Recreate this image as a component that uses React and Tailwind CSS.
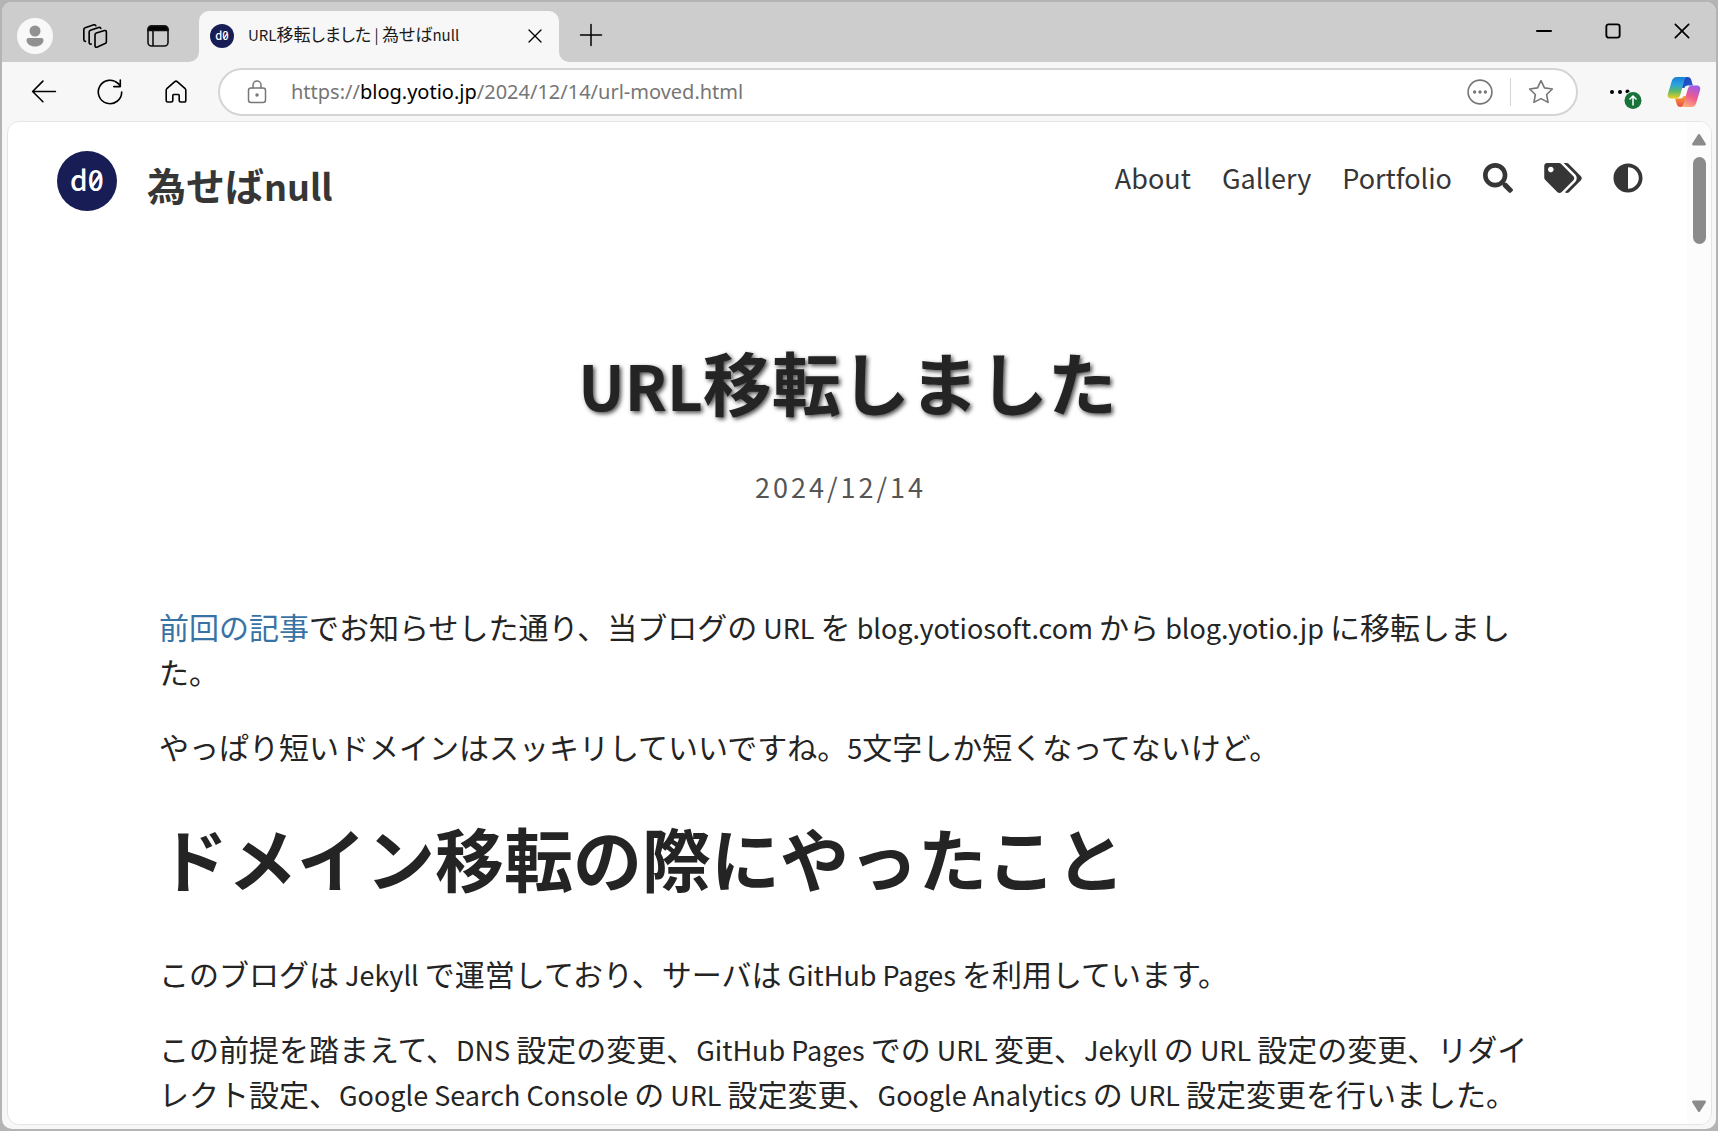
import { FaSearch, FaTags, FaAdjust } from "react-icons/fa";

const iconBtn = "flex items-center justify-center shrink-0";

function Line({ children, className, sw = 2 }) {
  return (
    <svg viewBox="0 0 24 24" className={className} fill="none" stroke="currentColor" strokeWidth={sw} strokeLinecap="round" strokeLinejoin="round" aria-hidden="true">
      {children}
    </svg>
  );
}

function Logo({ className }) {
  return (
    <svg viewBox="0 0 60 60" className={className} role="img" aria-label="d0">
      <circle cx="30" cy="30" r="30" fill="#181d55" />
      <text x="13" y="40" fill="#fff" className="font-['Noto_Sans_CJK_JP',sans-serif] text-[28px] font-medium">d0</text>
      <path d="M34.500 36L43 24" stroke="#fff" strokeWidth="3" />
    </svg>
  );
}

// Latin runs are set slightly smaller than the surrounding kana and kanji.
function L({ children }) {
  return <span className="text-[27px] leading-none">{children}</span>;
}

function TabStrip() {
  return (
    <div className="flex h-15 bg-[#cdcdcd]">
      <div className="flex items-center pl-[15px] pt-2">
        <button aria-label="Profile" className={`${iconBtn} size-9 rounded-full bg-[#f8f8f8]`}>
          <svg viewBox="0 0 36 36" className="size-9" fill="#919191" aria-hidden="true">
            <circle cx="18" cy="13" r="5.5" />
            <path d="M11.5 20h13a2 2 0 0 1 2 2c0 4-4 6.500-8.500 6.500S9.500 26 9.500 22a2 2 0 0 1 2-2z" />
          </svg>
        </button>
        <button aria-label="Workspaces" className={`${iconBtn} ml-[26px] w-8 h-9`}>
          <Line className="size-[26px]" sw={1.5}>
            <path d="M13.200 9.300l7.600-2.300c1-.3 1.700.3 1.700 1.300v8.900c0 .9-.4 1.500-1.200 1.800l-7.600 3.300c-1 .4-1.700-.2-1.700-1.200v-10c0-.9.400-1.500 1.200-1.800z" />
            <path d="M8.500 19.500c-1.300.1-1.900-.4-1.900-1.400V8.400c0-.9.400-1.400 1.200-1.700l7.600-2.500c1-.3 1.700 0 1.900.8" />
            <path d="M3.200 17c-1-.1-1.500-.7-1.500-1.600V6c0-.9.400-1.400 1.200-1.700l8-2.600c1-.3 1.600 0 1.900.8" />
          </Line>
        </button>
        <button aria-label="Tab actions" className={`${iconBtn} ml-[31px] w-8 h-9`}>
          <svg viewBox="0 0 22 22" className="size-[22px]" fill="none" stroke="#111" strokeWidth="1.600" aria-hidden="true">
            <rect x="1" y="1" width="20" height="20" rx="3.500" />
            <path d="M6 6v15" />
            <path d="M1 5.500V4.500A3.500 3.500 0 0 1 4.500 1h13A3.500 3.500 0 0 1 21 4.500v1z" fill="#000" />
          </svg>
        </button>
      </div>
      <div className="flex items-end">
        <svg viewBox="0 0 10 10" className="size-[10px] ml-[15px]" fill="#f7f7f7" aria-hidden="true"><path d="M10 0v10H0A10 10 0 0 0 10 0z" /></svg>
        <div className="flex h-[51px] w-[360px] items-center rounded-t-[10px] bg-[#f7f7f7] pl-[11px] pr-2 pb-[2px]">
          <Logo className="size-6 shrink-0" />
          <span className="ml-[14px] whitespace-nowrap text-[15px] text-[#1a1a1a]">URL<span className="text-[17px] leading-none [font-feature-settings:'palt']">移転しました</span> | <span className="text-[17px] leading-none [font-feature-settings:'palt']">為せば</span>null</span>
          <button aria-label="Close tab" className={`${iconBtn} ml-auto size-8`}>
            <Line className="size-4" sw={2}><path d="M3 3l18 18M21 3L3 21" /></Line>
          </button>
        </div>
        <svg viewBox="0 0 10 10" className="size-[10px]" fill="#f7f7f7" aria-hidden="true"><path d="M0 0v10h10A10 10 0 0 1 0 0z" /></svg>
      </div>
      <button aria-label="New tab" className={`${iconBtn} ml-1 mt-[15px] size-9`}>
        <Line className="size-6" sw={1.5}><path d="M12 1.500v21M1.500 12h21" /></Line>
      </button>
      <div className="ml-auto flex h-[58px] text-black">
        <button aria-label="Minimize" className={`${iconBtn} w-[69px]`}>
          <Line className="size-4" sw={3}><path d="M1.500 12h21" /></Line>
        </button>
        <button aria-label="Maximize" className={`${iconBtn} w-[69px]`}>
          <Line className="size-4" sw={2.8}><rect x="2" y="2" width="20" height="20" rx="3.500" /></Line>
        </button>
        <button aria-label="Close" className={`${iconBtn} w-[69px]`}>
          <Line className="size-4" sw={2.600}><path d="M2 2l20 20M22 2L2 22" /></Line>
        </button>
      </div>
    </div>
  );
}

function Copilot() {
  return (
    <svg viewBox="0 0 34 32" className="h-8 w-[34px]" aria-hidden="true">
      <defs>
        <linearGradient id="cpA" x1="0" y1="0" x2="0" y2="1">
          <stop offset="0" stopColor="#1b7fd6" />
          <stop offset="0.350" stopColor="#2aa3e0" />
          <stop offset="0.650" stopColor="#5cb86a" />
          <stop offset="1" stopColor="#f2cf1f" />
        </linearGradient>
        <linearGradient id="cpB" x1="0.700" y1="0" x2="0.300" y2="1">
          <stop offset="0" stopColor="#a05be8" />
          <stop offset="0.500" stopColor="#ee5a8e" />
          <stop offset="1" stopColor="#fdb07c" />
        </linearGradient>
        <linearGradient id="cpC" x1="0" y1="0" x2="1" y2="1">
          <stop offset="0" stopColor="#1a3fae" />
          <stop offset="1" stopColor="#2b62dc" />
        </linearGradient>
        <linearGradient id="cpD" x1="0" y1="0" x2="0" y2="1">
          <stop offset="0" stopColor="#f5a22c" />
          <stop offset="1" stopColor="#ea4a4a" />
        </linearGradient>
      </defs>
      <path d="M16 1h4.500c2.200 0 3.200 1 3.800 2.900L25.900 9.500H21c-2 0-3 .8-3.600 2.500L15 12z" fill="url(#cpC)" />
      <path d="M18 31h-4.500c-2.200 0-3.200-1-3.800-2.900L8.100 22.500H13c2 0 3-.8 3.600-2.500L19 20z" fill="url(#cpD)" />
      <path d="M10 1h11.500c-2.500 0-3.600 1.700-4.200 3.800L13.200 19c-.7 2.200-2 3.500-4.200 3.500H4.500C1.500 22.500 0 20.500 1 17.500L4.600 5.500C5.500 2.500 7 1 10 1z" fill="url(#cpA)" />
      <path d="M24 31H12.500c2.500 0 3.600-1.700 4.200-3.800L20.800 13c.7-2.200 2-3.500 4.200-3.500h4.500c3 0 4.500 2 3.500 5l-3.600 12C28.500 29.500 27 31 24 31z" fill="url(#cpB)" />
    </svg>
  );
}

function Toolbar() {
  return (
    <div className="flex h-[59px] items-center bg-[#f7f7f7] pl-[22px] pr-[14px]">
      <button aria-label="Back" className={`${iconBtn} size-10`}>
        <Line className="size-[26px]" sw={1.5}><path d="M22.500 11.500H2M11 2L1.500 11.500 11 21" /></Line>
      </button>
      <button aria-label="Refresh" className={`${iconBtn} ml-[26px] size-10`}>
        <Line className="size-[26px]" sw={1.5}><path d="M22.800 12A10.800 10.800 0 1 1 19.600 4.300L21.500 6.200M21.500 1v6h-6" /></Line>
      </button>
      <button aria-label="Home" className={`${iconBtn} ml-[26px] size-10`}>
        <Line className="size-6" sw={1.6}><path d="M10.800 1.700a1.800 1.800 0 0 1 2.400 0l8 7c.4.400.6.900.6 1.400v10.400a1.500 1.500 0 0 1-1.500 1.500h-3.600a1.500 1.500 0 0 1-1.500-1.500v-5a1 1 0 0 0-1-1h-4.400a1 1 0 0 0-1 1v5a1.500 1.500 0 0 1-1.500 1.500H3.700a1.500 1.500 0 0 1-1.500-1.500v-10.400c0-.5.200-1 .6-1.400z" /></Line>
      </button>
      <div className="ml-[22px] flex h-12 min-w-0 flex-1 items-center rounded-full border-2 border-[#d4d4d4] bg-white pl-[23px] pr-[21px] text-[#777]">
        <button aria-label="Site information" className={`${iconBtn} size-7`}>
          <Line className="size-6" sw={1.5}>
            <rect x="3.500" y="8" width="17" height="14.500" rx="2.500" />
            <path d="M8 8V5a4 4 0 0 1 8 0v3" />
            <circle cx="12" cy="15" r="1" fill="currentColor" />
          </Line>
        </button>
        <a href="https://blog.yotio.jp/2024/12/14/url-moved.html" className="ml-5 whitespace-nowrap pt-px font-['Noto_Sans','Noto_Sans_CJK_JP',sans-serif] text-[20px] text-[#767676]">
          https://<span className="text-black">blog.yotio.jp</span>/2024/12/14/url-moved.html
        </a>
        <button aria-label="More site options" className={`${iconBtn} ml-auto size-7`}>
          <Line className="size-[26px]" sw={1.5}>
            <circle cx="12" cy="12" r="11" />
            <circle cx="7" cy="12" r="0.800" fill="currentColor" /><circle cx="12" cy="12" r="0.800" fill="currentColor" /><circle cx="17" cy="12" r="0.800" fill="currentColor" />
          </Line>
        </button>
        <span className="ml-4 h-7 w-px bg-[#d4d4d4]" />
        <button aria-label="Add to favorites" className={`${iconBtn} ml-4 size-7`}>
          <Line className="size-[26px]" sw={1.5}>
            <path d="M12 1.500l3.200 6.700 7.300 1-5.300 5.100 1.300 7.300L12 18.100l-6.500 3.500 1.300-7.300L1.500 9.200l7.300-1z" />
          </Line>
        </button>
      </div>
      <button aria-label="Settings and more, update available" className={`${iconBtn} ml-7 h-10 w-9`}>
        <svg viewBox="0 0 36 40" className="h-10 w-9" aria-hidden="true">
          <circle cx="6" cy="20" r="2" /><circle cx="14" cy="20" r="2" /><circle cx="21.500" cy="19.500" r="2" />
          <circle cx="27" cy="28.500" r="9.500" fill="#f7f7f7" />
          <circle cx="27" cy="28.500" r="8.500" fill="#17733a" />
          <path d="M27 33.500v-9.500M23.500 27.500l3.500-3.500 3.500 3.500" fill="none" stroke="#fff" strokeWidth="1.500" />
        </svg>
      </button>
      <button aria-label="Copilot" className={`${iconBtn} ml-6 h-10 w-9`}><Copilot /></button>
    </div>
  );
}

function SiteHeader() {
  return (
    <header className="flex items-start justify-between pl-[49px] pr-11 pt-7">
      <a href="#" className="flex items-start text-[#363636]">
        <Logo className="mt-px size-15" />
        <span className="ml-[30px] mt-1 text-[39px] font-bold leading-[60px]">為せば<span className="text-[36px] leading-none">null</span></span>
      </a>
      <nav className="flex h-15 items-center gap-[31px] pb-[5px] text-[27px] leading-[45px] text-[#363636]">
        <a href="#about">About</a>
        <a href="#gallery">Gallery</a>
        <a href="#portfolio">Portfolio</a>
        <button aria-label="Search"><FaSearch className="size-[30px]" /></button>
        <button aria-label="Tags"><FaTags className="h-[30px] w-[38px]" /></button>
        <button aria-label="Toggle theme"><FaAdjust className="size-[30px]" /></button>
      </nav>
    </header>
  );
}

function Article() {
  return (
    <main className="pb-2 text-[#242424]">
      <h1 className="mt-[115px] text-center text-[69px] font-bold leading-[104px] [text-shadow:2px_2px_4px_rgba(0,0,0,0.7)]"><span className="text-[62px] leading-none">URL</span>移転しました</h1>
      <p className="mt-[31px] pr-[14px] text-center text-[27px] leading-[45px] tracking-[3px] text-[#555]">
        <time dateTime="2024-12-14">2024/12/14</time>
      </p>
      <div className="mt-[95px] flex flex-col gap-[30px] px-[151px] text-[30px] leading-[45px]">
        <p>
          <a href="#previous" className="text-[#3873a6]">前回の記事</a>でお知らせした通り、当ブログの<L> URL </L>を<L> blog.yotiosoft.com </L>から<L> blog.yotio.jp </L>に移転しました。
        </p>
        <p>やっぱり短いドメインはスッキリしていいですね。<L>5</L>文字しか短くなってないけど。</p>
        <h2 className="mb-3 mt-[6px] text-[69px] font-bold leading-[104px]">ドメイン移転の際にやったこと</h2>
        <p>このブログは<L> Jekyll </L>で運営しており、サーバは<L> GitHub Pages </L>を利用しています。</p>
        <p>この前提を踏まえて、<L>DNS </L>設定の変更、<L>GitHub Pages </L>での<L> URL </L>変更、<L>Jekyll </L>の<L> URL </L>設定の変更、リダイレクト設定、<L>Google Search Console </L>の<L> URL </L>設定変更、<L>Google Analytics </L>の<L> URL </L>設定変更を行いました。</p>
      </div>
    </main>
  );
}

function Scrollbar() {
  return (
    <div className="flex w-6 shrink-0 flex-col items-center bg-[#fcfcfc] py-3 text-[#8b8b8b]">
      <svg viewBox="0 0 14 12" className="h-3 w-[14px]" fill="currentColor" aria-hidden="true"><path d="M6 .6a1.200 1.200 0 0 1 2 0l5.700 9a1.200 1.200 0 0 1-1 1.900H1.300a1.200 1.200 0 0 1-1-1.900z" /></svg>
      <div className="mt-[11px] h-[87px] w-[13px] rounded-full bg-[#8b8b8b]" />
      <svg viewBox="0 0 14 12" className="mt-auto h-3 w-[14px]" fill="currentColor" aria-hidden="true"><path d="M6 11.400a1.200 1.200 0 0 0 2 0l5.700-9a1.200 1.200 0 0 0-1-1.900H1.300a1.200 1.200 0 0 0-1 1.900z" /></svg>
    </div>
  );
}

export default function App() {
  return (
    <div lang="ja" className="h-screen bg-[#b4b4b4] p-[2px] font-['Noto_Sans_CJK_JP',sans-serif] text-black">
      <div className="flex h-full flex-col overflow-hidden rounded-[10px] bg-[#f7f7f7]">
        <TabStrip />
        <Toolbar />
        <div className="ml-[5px] mr-1 mb-1 flex min-h-0 flex-1 overflow-hidden rounded-[12px] border border-[#e4e4e4] bg-white">
          <div className="min-w-0 flex-1 overflow-hidden">
            <SiteHeader />
            <Article />
          </div>
          <Scrollbar />
        </div>
      </div>
    </div>
  );
}
